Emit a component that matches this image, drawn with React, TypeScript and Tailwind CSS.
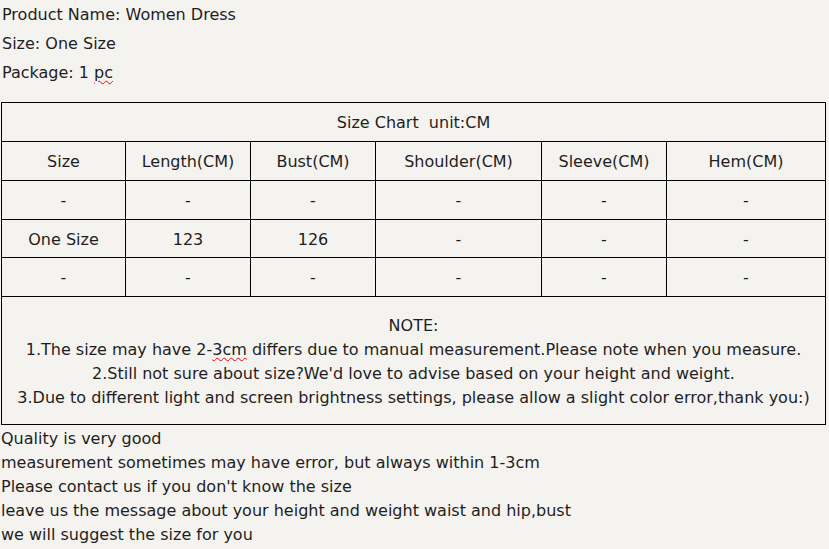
import React from "react";

const cols = ["w-[124px]", "w-[125px]", "w-[125px]", "w-[166px]", "w-[125px]", "w-[158px]"];

function Row({ cells, h }: { cells: string[]; h: string }) {
  return (
    <div className={`flex border-b border-black ${h}`}>
      {cells.map((c, i) => (
        <div
          key={i}
          className={`${cols[i]} flex items-center justify-center pt-[2px] ${i < cells.length - 1 ? "border-r border-black" : ""}`}
        >
          {c}
        </div>
      ))}
    </div>
  );
}

export default function App() {
  return (
    <div
      className="w-[829px] h-[549px] bg-[#f5f3f0] text-[#1e1e1e] overflow-hidden"
      style={{ fontFamily: '"DejaVu Sans", Verdana, sans-serif' }}
    >
      <div className="pl-[2px] text-[16px] leading-[29px]">
        <div>Product Name: Women Dress</div>
        <div>Size: One Size</div>
        <div>
          Package: 1{" "}
          <span className="underline decoration-wavy decoration-red-600 decoration-1 underline-offset-2">pc</span>
        </div>
      </div>
      <div className="mt-[15px] ml-[1px] w-[825px] border border-black text-[16px]">
        <div className="h-[39px] border-b border-black flex items-center justify-center pt-[2px]">
          Size Chart&nbsp;&nbsp;unit:CM
        </div>
        <Row h="h-[39px]" cells={["Size", "Length(CM)", "Bust(CM)", "Shoulder(CM)", "Sleeve(CM)", "Hem(CM)"]} />
        <Row h="h-[39px]" cells={["-", "-", "-", "-", "-", "-"]} />
        <Row h="h-[38px]" cells={["One Size", "123", "126", "-", "-", "-"]} />
        <Row h="h-[39px]" cells={["-", "-", "-", "-", "-", "-"]} />
        <div className="h-[127px] flex flex-col items-center justify-center leading-[24px] text-center pt-[2px]">
          <div>NOTE:</div>
          <div>
            1.The size may have 2-
            <span className="underline decoration-wavy decoration-red-600 decoration-1 underline-offset-2">3cm</span>
            {" "}differs due to manual measurement.Please note when you measure.
          </div>
          <div>2.Still not sure about size?We'd love to advise based on your height and weight.</div>
          <div>3.Due to different light and screen brightness settings, please allow a slight color error,thank you:)</div>
        </div>
      </div>
      <div className="pl-[1px] pt-[2px] text-[16px] leading-[24px]">
        <div>Quality is very good</div>
        <div>measurement sometimes may have error, but always within 1-3cm</div>
        <div>Please contact us if you don't know the size</div>
        <div>leave us the message about your height and weight waist and hip,bust</div>
        <div>we will suggest the size for you</div>
      </div>
    </div>
  );
}
